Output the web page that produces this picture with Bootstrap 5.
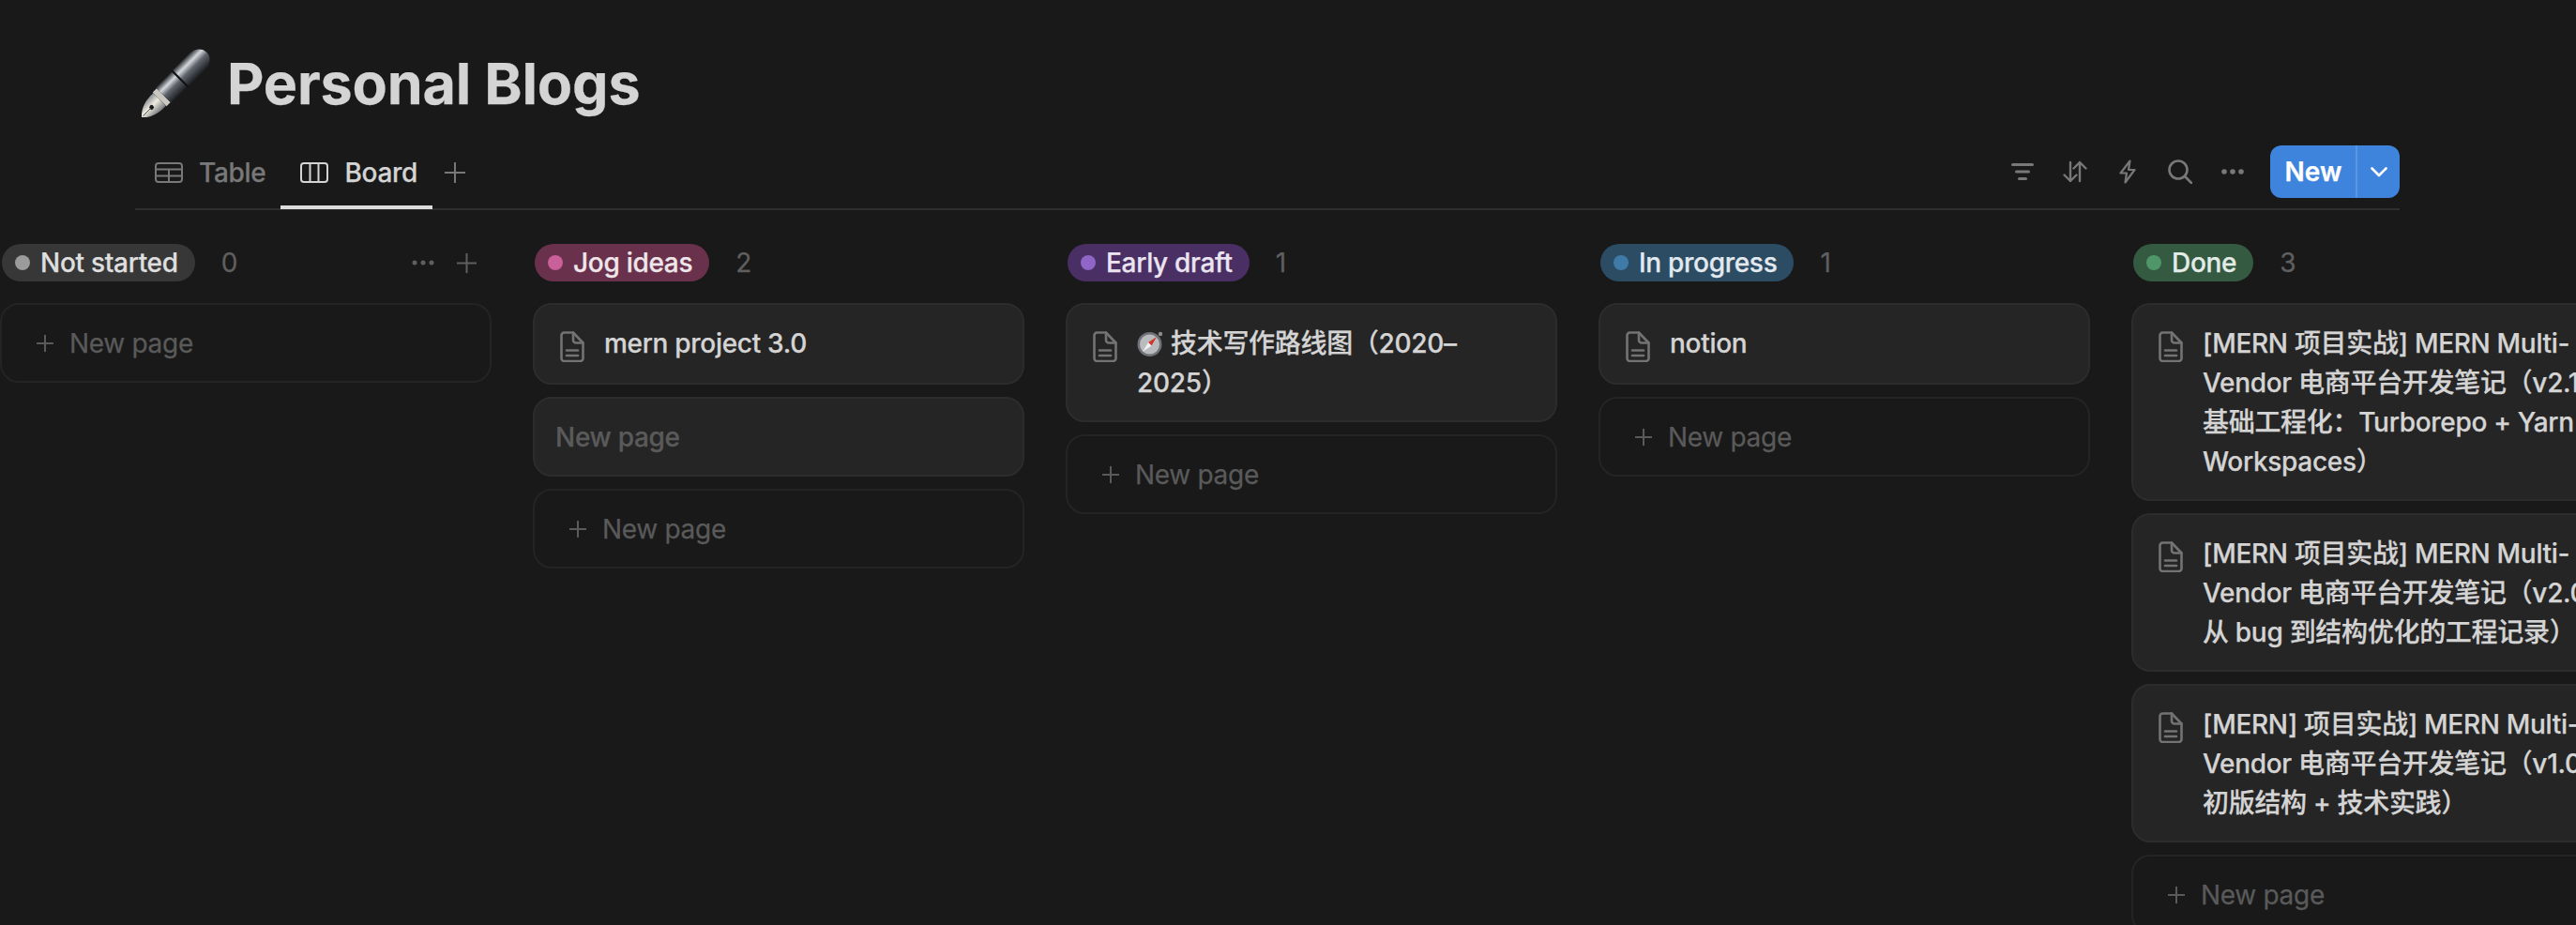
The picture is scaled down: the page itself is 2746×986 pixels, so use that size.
<!DOCTYPE html>
<html lang="en">
<head>
<meta charset="utf-8">
<title>Personal Blogs</title>
<link href="https://cdn.jsdelivr.net/npm/bootstrap@5.3.0/dist/css/bootstrap.min.css" rel="stylesheet">
<style>
html, body { background: #191919; overflow: hidden; }
body { width: 2746px; height: 986px; font-family: Inter, "Noto Sans CJK SC", sans-serif; font-size: 28px; line-height: 42px; color: #d4d4d4; font-weight: 500; letter-spacing: -.3px; -webkit-text-stroke: .25px currentColor; }
.page-head { padding: 51px 0 0 149px; height: 155px; gap: 17px; }
.page-head h1 { font-size: 61px; line-height: 76px; font-weight: 700; color: #d4d4d4; margin: 0; letter-spacing: -.2px; }
.view-bar { margin-left: 144px; width: 2414px; height: 69px; border-bottom: 2px solid #2f2f2f; }
.view-tab { padding: 0 16px 10px 21px; gap: 17px; margin-bottom: -1px; color: #787878; text-decoration: none; }
.view-tab.active { color: #d4d4d4; box-shadow: inset 0 -4px 0 #dcdcdc; }
.view-add { margin: 0 0 10px 13px; }
.tool-box { width: 56px; height: 56px; }
.new-group { margin-left: 12px; height: 56px; }
.new-group .btn { background: #3f84dc; border: 0; color: #fff; font-size: 28px; font-weight: 600; line-height: 56px; padding: 0; height: 56px; border-radius: 12px; }
.new-main { width: 92px; }
.new-more { width: 47px; border-left: 2px solid #5c96e1 !important; }
.board-area { padding-top: 36px; gap: 44px; width: 3000px; }
.lane { width: 524px; flex: 0 0 524px; }
.lane-head { height: 40px; margin-bottom: 23px; padding-left: 2px; }
.status-tag { height: 40px; border-radius: 20px; padding: 0 18px 0 14px; gap: 11px; font-size: 28px; font-weight: 500; line-height: 40px; }
.status-dot { width: 16px; height: 16px; border-radius: 50%; flex: none; }
.lane-count { margin-left: 28px; color: #5f5f5f; font-weight: 400; }
.lane-stack { gap: 13px; }
.item-tile.card { background: #252525; border: 2px solid #2c2c2c; border-radius: 20px; padding: 20px 6px 19px 27px; color: #d4d4d4; min-height: 87px; flex-direction: row; }
.item-tile .doc-icon { flex: none; margin: 8px 21px 0 0; }
.item-text { min-width: 0; flex: 1; }
.compass { vertical-align: -4px; margin-right: 8px; }
.draft-tile.card { background: #252525; border: 2px solid #2c2c2c; border-radius: 20px; height: 85px; padding: 0 0 0 22px; color: #5a5a5a; flex-direction: row; align-items: center; }
.add-tile.card { background: transparent; border: 2px solid #242424; border-radius: 20px; height: 85px; padding: 0 0 0 37px; color: #5a5a5a; font-weight: 400; flex-direction: row; align-items: center; gap: 17px; }
.tag-gray { background: #373737; color: #dfdfdf; } .tag-gray .status-dot { background: #9b9b9b; }
.tag-pink { background: #69314c; color: #efe6ea; } .tag-pink .status-dot { background: #c9609a; }
.tag-purple { background: #492f64; color: #ebe4f0; } .tag-purple .status-dot { background: #8f65c8; }
.tag-blue { background: #2c4c64; color: #e3eaef; } .tag-blue .status-dot { background: #3f7ba8; }
.tag-green { background: #355a42; color: #e3ece6; } .tag-green .status-dot { background: #4f9768; }
</style>
</head>
<body>
<svg width="0" height="0" class="position-absolute">
  <defs>
    <symbol id="doc" viewBox="0 0 26 33"><g fill="none" stroke="#737373" stroke-width="2.600" stroke-linejoin="round" stroke-linecap="round"><path d="M4.500 1.500h9.500l10.500 11v16.500a3 3 0 0 1-3 3h-17a3 3 0 0 1-3-3v-24.500a3 3 0 0 1 3-3z"/><path d="M14 1.500v8a3 3 0 0 0 3 3h7.500"/><path d="M7 20.500h12M7 26h12"/></g></symbol>
    <symbol id="plus" viewBox="0 0 18 18"><path d="M9 0v18M0 9h18" stroke="#5a5a5a" stroke-width="2" fill="none"/></symbol>
    <linearGradient id="metal" x1="0" y1="0" x2="0" y2="1"><stop offset="0" stop-color="#2e3136"/><stop offset=".28" stop-color="#d5d9dd"/><stop offset=".55" stop-color="#5f646c"/><stop offset="1" stop-color="#1c1e22"/></linearGradient>
    <linearGradient id="nibfill" x1="0" y1="0" x2="0" y2="1"><stop offset="0" stop-color="#8b8f94"/><stop offset=".45" stop-color="#f0ece2"/><stop offset="1" stop-color="#77787a"/></linearGradient>
  </defs>
</svg>

<header class="page-head d-flex align-items-start">
  <svg width="76" height="76" viewBox="0 0 76 76" class="flex-none">
    <g transform="translate(2 74) rotate(-45)">
      <path d="M0 0C7-8 17-10 27-9.500V9.500C17 10 7 8 0 0z" fill="url(#nibfill)"/>
      <circle cx="15" cy="0" r="2.400" fill="#17181a"/>
      <path d="M2 0h12" stroke="#3a3b3d" stroke-width=".8"/>
      <rect x="27" y="-10.500" width="6" height="21" fill="#c9c7bf"/>
      <rect x="33" y="-11.500" width="24" height="23" fill="url(#metal)"/>
      <rect x="57" y="-12" width="2" height="24" fill="#111214"/>
      <path d="M59-12H84C93-12 98-6 98 0S93 12 84 12H59z" fill="url(#metal)"/>
    </g>
  </svg>
  <h1>Personal Blogs</h1>
</header>

<nav class="view-bar d-flex align-items-stretch">
  <a class="view-tab d-flex align-items-center" href="#">
    <svg width="30" height="22" viewBox="0 0 30 22" fill="none" stroke="#787878" stroke-width="2"><rect x="1" y="1" width="28" height="20" rx="3"/><path d="M1 7.500h28M1 14.500h28M15 7.500v13.500"/></svg>
    <span>Table</span>
  </a>
  <a class="view-tab active d-flex align-items-center" href="#">
    <svg width="30" height="22" viewBox="0 0 30 22" fill="none" stroke="#d4d4d4" stroke-width="2"><rect x="1" y="1" width="28" height="20" rx="3"/><path d="M10.500 1v20M19.500 1v20"/></svg>
    <span>Board</span>
  </a>
  <div class="view-add d-flex align-items-center">
    <svg width="22" height="22" viewBox="0 0 22 22"><path d="M11 0v22M0 11h22" stroke="#787878" stroke-width="2"/></svg>
  </div>
  <div class="ms-auto d-flex align-items-start">
    <div class="tool-box d-flex align-items-center justify-content-center">
      <svg width="24" height="18" viewBox="0 0 24 18" fill="none" stroke="#787878" stroke-width="3" stroke-linecap="round"><path d="M1.500 1.500h21M5.500 9h13M8.500 16.500h7"/></svg>
    </div>
    <div class="tool-box d-flex align-items-center justify-content-center">
      <svg width="26" height="24" viewBox="0 0 26 24" fill="none" stroke="#787878" stroke-width="2.400" stroke-linecap="round" stroke-linejoin="round"><path d="M8 2v20M1.500 15.500L8 22l6.500-6.500M18 22V2M11.500 8.500L18 2l6.500 6.500"/></svg>
    </div>
    <div class="tool-box d-flex align-items-center justify-content-center">
      <svg width="18" height="26" viewBox="0 0 18 26" fill="none" stroke="#787878" stroke-width="2.200" stroke-linejoin="round"><path d="M11.500 1.500L1.500 14.500H8L6.500 24.500L16.500 11H10z"/></svg>
    </div>
    <div class="tool-box d-flex align-items-center justify-content-center">
      <svg width="26" height="26" viewBox="0 0 26 26" fill="none" stroke="#787878" stroke-width="2.600" stroke-linecap="round"><circle cx="11" cy="11" r="9.500"/><path d="M18 18l7 7"/></svg>
    </div>
    <div class="tool-box d-flex align-items-center justify-content-center">
      <svg width="24" height="6" viewBox="0 0 24 6" fill="#787878"><circle cx="3" cy="3" r="2.800"/><circle cx="12" cy="3" r="2.800"/><circle cx="21" cy="3" r="2.800"/></svg>
    </div>
    <div class="btn-group new-group">
      <button type="button" class="btn new-main">New</button>
      <button type="button" class="btn new-more d-flex align-items-center justify-content-center">
        <svg width="18" height="11" viewBox="0 0 18 11" fill="none" stroke="#fff" stroke-width="2.600" stroke-linecap="round" stroke-linejoin="round"><path d="M1.500 1.500L9 9l7.500-7.500"/></svg>
      </button>
    </div>
  </div>
</nav>

<main class="board-area d-flex align-items-start">
  <section class="lane">
    <div class="lane-head d-flex align-items-center">
      <span class="status-tag tag-gray d-inline-flex align-items-center"><i class="status-dot"></i>Not started</span>
      <span class="lane-count">0</span>
      <span class="ms-auto d-flex align-items-center gap-4 pe-3">
        <svg width="24" height="6" viewBox="0 0 24 6" fill="#5f5f5f"><circle cx="3" cy="3" r="2.500"/><circle cx="12" cy="3" r="2.500"/><circle cx="21" cy="3" r="2.500"/></svg>
        <svg width="21" height="21" viewBox="0 0 21 21"><path d="M10.500 0v21M0 10.500h21" stroke="#5f5f5f" stroke-width="2"/></svg>
      </span>
    </div>
    <div class="lane-stack d-flex flex-column">
      <div class="card add-tile"><svg width="18" height="18"><use href="#plus"/></svg><span>New page</span></div>
    </div>
  </section>

  <section class="lane">
    <div class="lane-head d-flex align-items-center">
      <span class="status-tag tag-pink d-inline-flex align-items-center"><i class="status-dot"></i>Jog ideas</span>
      <span class="lane-count">2</span>
    </div>
    <div class="lane-stack d-flex flex-column">
      <div class="card item-tile"><svg class="doc-icon" width="26" height="33"><use href="#doc"/></svg><div class="item-text">mern project 3.0</div></div>
      <div class="card draft-tile">New page</div>
      <div class="card add-tile"><svg width="18" height="18"><use href="#plus"/></svg><span>New page</span></div>
    </div>
  </section>

  <section class="lane">
    <div class="lane-head d-flex align-items-center">
      <span class="status-tag tag-purple d-inline-flex align-items-center"><i class="status-dot"></i>Early draft</span>
      <span class="lane-count">1</span>
    </div>
    <div class="lane-stack d-flex flex-column">
      <div class="card item-tile"><svg class="doc-icon" width="26" height="33"><use href="#doc"/></svg><div class="item-text"><svg class="compass" width="28" height="27" viewBox="0 0 28 27"><circle cx="25" cy="3" r="2.200" fill="#8a8d90"/><circle cx="13.500" cy="14" r="13" fill="#6f7276"/><circle cx="13.500" cy="14" r="10.500" fill="#b9bbbd"/><path d="M21 6L15.500 15.500L12 12z" fill="#d3352c"/><path d="M6 22L12 12L15.500 15.500z" fill="#eef0f1"/></svg>技术写作路线图（2020–<br>2025）</div></div>
      <div class="card add-tile"><svg width="18" height="18"><use href="#plus"/></svg><span>New page</span></div>
    </div>
  </section>

  <section class="lane">
    <div class="lane-head d-flex align-items-center">
      <span class="status-tag tag-blue d-inline-flex align-items-center"><i class="status-dot"></i>In progress</span>
      <span class="lane-count">1</span>
    </div>
    <div class="lane-stack d-flex flex-column">
      <div class="card item-tile"><svg class="doc-icon" width="26" height="33"><use href="#doc"/></svg><div class="item-text">notion</div></div>
      <div class="card add-tile"><svg width="18" height="18"><use href="#plus"/></svg><span>New page</span></div>
    </div>
  </section>

  <section class="lane">
    <div class="lane-head d-flex align-items-center">
      <span class="status-tag tag-green d-inline-flex align-items-center"><i class="status-dot"></i>Done</span>
      <span class="lane-count">3</span>
    </div>
    <div class="lane-stack d-flex flex-column">
      <div class="card item-tile"><svg class="doc-icon" width="26" height="33"><use href="#doc"/></svg><div class="item-text">[MERN 项目实战] MERN Multi-<br>Vendor 电商平台开发笔记（v2.1：<br>基础工程化：Turborepo + Yarn<br>Workspaces）</div></div>
      <div class="card item-tile"><svg class="doc-icon" width="26" height="33"><use href="#doc"/></svg><div class="item-text">[MERN 项目实战] MERN Multi-<br>Vendor 电商平台开发笔记（v2.0：<br>从 bug 到结构优化的工程记录）</div></div>
      <div class="card item-tile"><svg class="doc-icon" width="26" height="33"><use href="#doc"/></svg><div class="item-text">[MERN] 项目实战] MERN Multi-<br>Vendor 电商平台开发笔记（v1.0：<br>初版结构 + 技术实践）</div></div>
      <div class="card add-tile"><svg width="18" height="18"><use href="#plus"/></svg><span>New page</span></div>
    </div>
  </section>
</main>
<script src="https://cdn.jsdelivr.net/npm/bootstrap@5.3.0/dist/js/bootstrap.bundle.min.js"></script>
</body>
</html>
